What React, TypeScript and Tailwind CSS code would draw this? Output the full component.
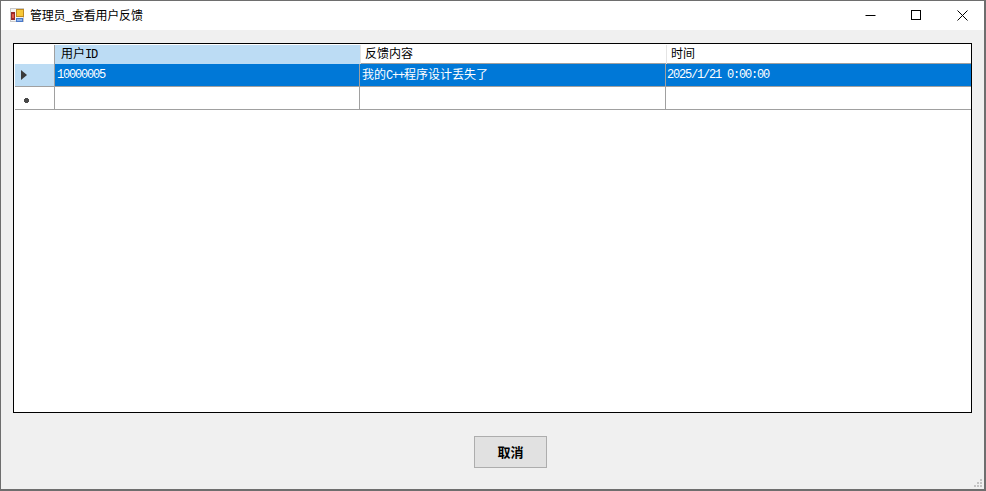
import React from 'react';

const CJK = "font-['Liberation_Mono','Noto_Sans_CJK_SC',monospace]";
const COLS = 'grid grid-cols-[40px_305px_306px_305px]';

const Latin: React.FC<{ children: React.ReactNode }> = ({ children }) => (
  <span className="tracking-[-1.2px]">{children}</span>
);

const AppIcon = () => (
  <svg width="15" height="15" viewBox="0 0 15 15" className="shrink-0">
    <rect x="0" y="0" width="14" height="14" fill="#c9c9c9" />
    <rect x="1" y="1" width="12" height="12" fill="#f4f4f4" />
    <rect x="6" y="1" width="8" height="8" fill="#c08a20" />
    <rect x="7" y="2" width="6" height="6" fill="#f7c83a" />
    <rect x="1" y="4" width="4" height="8" fill="#9a2a2a" />
    <rect x="2" y="6" width="2" height="4" fill="#e05a4a" />
    <rect x="6" y="10" width="7" height="4" fill="#4a78c8" />
    <rect x="7" y="11" width="5" height="2" fill="#8fb4ea" />
  </svg>
);

const WindowButtons = () => (
  <div className="flex items-center -mr-px">
    <button className="w-[46px] h-[29px] flex items-center justify-center">
      <svg width="11" height="11" viewBox="0 0 11 11">
        <path d="M0.5 5.5H10.5" stroke="#000" fill="none" />
      </svg>
    </button>
    <button className="w-[46px] h-[29px] flex items-center justify-center">
      <svg width="11" height="11" viewBox="0 0 11 11">
        <rect x="0.5" y="0.5" width="9" height="9" stroke="#000" fill="none" />
      </svg>
    </button>
    <button className="w-[46px] h-[29px] flex items-center justify-center">
      <svg width="11" height="11" viewBox="0 0 11 11">
        <path d="M0.5 0.5L10.5 10.5M10.5 0.5L0.5 10.5" stroke="#000" fill="none" />
      </svg>
    </button>
  </div>
);

const Grip = () => (
  <svg width="9" height="9" viewBox="0 0 9 9" className="absolute right-[2px] bottom-[2px]">
    <path d="M7 1h2v2H7zM4 4h2v2H4zM7 4h2v2H7zM1 7h2v2H1zM4 7h2v2H4zM7 7h2v2H7z" fill="#c4c4c4" />
  </svg>
);

export default function App() {
  return (
    <div className="w-[986px] h-[491px] flex flex-col bg-[#f0f0f0] border-l border-r-2 border-t border-b-2 border-[#6e6e6e] relative overflow-hidden">
      <div className="h-[29px] bg-white flex items-center justify-between shrink-0">
        <div className="flex items-center gap-[5px] pl-[9px]">
          <AppIcon />
          <span className="text-[12px] tracking-[-0.2px] leading-[14px] pb-[2px] text-black font-['Noto_Sans_CJK_SC',sans-serif]">管理员_查看用户反馈</span>
        </div>
        <WindowButtons />
      </div>

      <div className="flex-1 flex flex-col px-[12px] pt-[13px]">
        <div className={`h-[370px] w-[959px] border border-black bg-white pl-px pt-px ${CJK} text-[12px] text-black`}>
          <div className={`${COLS} h-[19px] border-b border-[#a0a0a0]`}>
            <div className="bg-white border-r border-[#a0a0a0]" />
            <div className="bg-[#bcdcf4] pl-[6px] pt-px leading-[19px]">用户<Latin>ID</Latin></div>
            <div className="pl-[4px] pt-px leading-[19px] border-l border-[#e4e4e4]">反馈内容</div>
            <div className="pl-[4px] pt-px leading-[19px] border-l border-[#e4e4e4]">时间</div>
          </div>

          <div className={`${COLS} h-[23px] border-b border-[#a0a0a0]`}>
            <div className="bg-[#bcdcf4] border-r border-[#a0a0a0] flex items-center pl-[6px]">
              <svg width="6" height="10" viewBox="0 0 6 10">
                <path d="M0 0L6 5L0 10Z" fill="#3a3a3a" />
              </svg>
            </div>
            <div className="bg-[#0078d7] text-white pl-[2px] pt-px leading-[21px] border-r border-[#a0a0a0]"><Latin>10000005</Latin></div>
            <div className="bg-[#0078d7] text-white pl-[2px] pt-[2px] leading-[20px] border-r border-[#a0a0a0]">我的<Latin>C++</Latin>程序设计丢失了</div>
            <div className="bg-[#0078d7] text-white pl-[1px] pt-px leading-[21px]"><Latin>2025/1/21 0:00:00</Latin></div>
          </div>

          <div className={`${COLS} h-[23px] border-b border-[#a0a0a0]`}>
            <div className="border-r border-[#a0a0a0] flex items-start pl-[8px] pt-[10px]">
              <svg width="7" height="7" viewBox="0 0 7 7">
                <path d="M2 1h3v1h1v3H5v1H2V5H1V2h1z" fill="#4a4a4a" />
              </svg>
            </div>
            <div className="border-r border-[#a0a0a0]" />
            <div className="border-r border-[#a0a0a0]" />
            <div />
          </div>
        </div>

        <div className="flex justify-start pt-[23px] pl-[461px]">
          <button className="w-[73px] h-[32px] bg-[#e1e1e1] border border-[#adadad] text-[13px] font-bold text-black font-['Noto_Sans_CJK_SC',sans-serif]">取消</button>
        </div>
      </div>

      <Grip />
    </div>
  );
}
